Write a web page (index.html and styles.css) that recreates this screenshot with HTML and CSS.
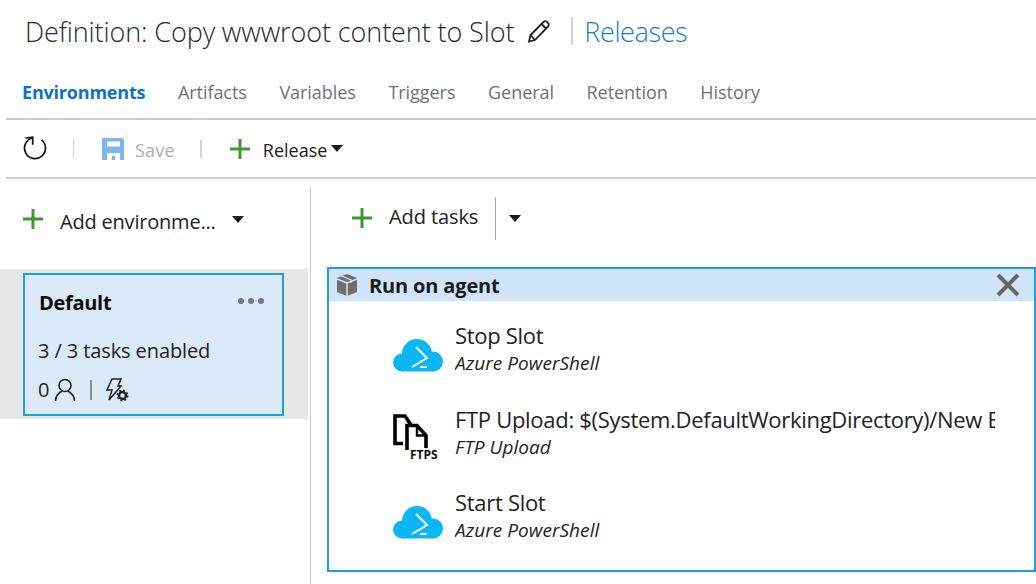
FILE: index.html
```html
<!DOCTYPE html>
<html>
<head>
<meta charset="utf-8">
<title>Definition</title>
<link rel="stylesheet" href="styles.css">
</head>
<body>

<header class="title-bar">
  <h1>Definition: Copy wwwroot content to Slot</h1>
  <svg class="pencil" width="24" height="24" viewBox="0 0 24 24"><path d="M2 22.500l1.500-6.500L16.500 3c1-1 2.500-1 3.500 0l1 1c1 1 1 2.500 0 3.500L8 21zM3.500 16L8 21M14.500 5l4.500 4.500" fill="none" stroke="#222" stroke-width="1.800"/></svg>
  <span class="title-sep"></span>
  <a class="releases">Releases</a>
</header>

<nav class="tabs">
  <a class="tab active">Environments</a>
  <a class="tab">Artifacts</a>
  <a class="tab">Variables</a>
  <a class="tab">Triggers</a>
  <a class="tab">General</a>
  <a class="tab">Retention</a>
  <a class="tab">History</a>
</nav>

<div class="toolbar">
  <svg class="refresh" width="26" height="26" viewBox="0 0 26 26"><path d="M18.500 3.800A10.500 10.500 0 1 1 9 2" fill="none" stroke="#111" stroke-width="1.700"/><path d="M2.300 2L9.700 1.300V8.700" fill="none" stroke="#111" stroke-width="1.700"/></svg>
  <span class="tool-sep first"></span>
  <svg class="save" width="22" height="22" viewBox="0 0 22 22"><path d="M0 0h20l2 2v20H0z" fill="#7db7ec"/><path d="M5 3.500h13v5H5z" fill="#fff"/><path d="M5 15h13v7H5z" fill="#fff"/><path d="M10 18h3v4h-3z" fill="#7db7ec"/></svg>
  <span class="save-label">Save</span>
  <span class="tool-sep"></span>
  <svg class="plus" width="20" height="20" viewBox="0 0 20 20"><path d="M10 0v20M0 10h20" stroke="#3c9a2c" stroke-width="3"/></svg>
  <span class="release-label">Release</span>
  <span class="caret"></span>
</div>

<main class="columns">
  <aside class="env-pane">
    <div class="add-env">
      <svg class="plus" width="20" height="20" viewBox="0 0 20 20"><path d="M10 0v20M0 10h20" stroke="#3c9a2c" stroke-width="3"/></svg>
      <span class="add-env-label">Add environme...</span>
      <span class="caret"></span>
    </div>
    <div class="env-row">
      <div class="env-card">
        <div class="env-head">
          <span class="env-name">Default</span>
          <span class="env-dots"><i></i><i></i><i></i></span>
        </div>
        <div class="env-tasks">3 / 3 tasks enabled</div>
        <div class="env-foot">
          <span>0</span>
          <svg width="22" height="24" viewBox="0 0 22 24"><circle cx="11" cy="7.500" r="6" fill="none" stroke="#222" stroke-width="1.600"/><path d="M1.500 23c0-5 3-8 6.500-10M20.500 23c0-5-3-8-6.500-10" fill="none" stroke="#222" stroke-width="1.600"/></svg>
          <span class="foot-sep"></span>
          <svg width="24" height="24" viewBox="0 0 24 24"><path d="M7 1h9l-3 7h3L4 22l3-10H2z" fill="none" stroke="#222" stroke-width="1.500"/><circle cx="17.500" cy="17.500" r="3.500" fill="none" stroke="#222" stroke-width="2.400"/><circle cx="17.500" cy="17.500" r="5.200" fill="none" stroke="#222" stroke-width="1.500" stroke-dasharray="2 2.080"/></svg>
        </div>
      </div>
    </div>
  </aside>

  <section class="task-pane">
    <div class="add-tasks">
      <svg class="plus" width="20" height="20" viewBox="0 0 20 20"><path d="M10 0v20M0 10h20" stroke="#3c9a2c" stroke-width="3"/></svg>
      <span class="add-tasks-label">Add tasks</span>
      <span class="add-tasks-sep"></span>
      <span class="caret"></span>
    </div>
    <div class="phase">
      <div class="phase-head">
        <svg width="24" height="24" viewBox="0 0 24 24"><path d="M12 1l10 4v14l-10 4L2 19V5z" fill="#6e6e6e"/><path d="M2 6l10 4 10-4M12 10v13" fill="none" stroke="#cfe5f7" stroke-width="1.500"/><path d="M6 2.800l10 4.200v3" fill="none" stroke="#cfe5f7" stroke-width="1.200"/></svg>
        <span class="phase-name">Run on agent</span>
        <svg class="phase-close" width="24" height="24" viewBox="0 0 24 24"><path d="M2 2l20 20M22 2L2 22" stroke="#666" stroke-width="4"/></svg>
      </div>
      <div class="task">
        <svg class="task-icon" width="52" height="34" viewBox="0 0 52 34"><circle cx="9" cy="23.500" r="9" fill="#0bb7f2"/><circle cx="24" cy="15" r="15" fill="#0bb7f2"/><circle cx="40" cy="22.500" r="10" fill="#0bb7f2"/><path d="M9 24h31v8.500H9z" fill="#0bb7f2"/><path d="M23 8l11 11-15 9" fill="none" stroke="#fff" stroke-width="2"/><path d="M27 28h7" stroke="#fff" stroke-width="2"/></svg>
        <div class="task-text">
          <div class="task-name">Stop Slot</div>
          <div class="task-type">Azure PowerShell</div>
        </div>
      </div>
      <div class="task">
        <div class="ftp-icon">
          <svg width="35" height="36" viewBox="0 0 35 36"><path d="M10 29.500H2V2h10l6 9" fill="none" stroke="#000" stroke-width="3.600"/><path d="M14 36V11.500h10l9 10V34" fill="none" stroke="#000" stroke-width="3.600"/><path d="M24 12v9.500h9" fill="none" stroke="#000" stroke-width="2.400"/></svg>
          <span class="ftp-label">FTPS</span>
        </div>
        <div class="task-text">
          <div class="task-name">FTP Upload: $(System.DefaultWorkingDirectory)/New Build Definition/drop</div>
          <div class="task-type">FTP Upload</div>
        </div>
      </div>
      <div class="task">
        <svg class="task-icon" width="52" height="34" viewBox="0 0 52 34"><circle cx="9" cy="23.500" r="9" fill="#0bb7f2"/><circle cx="24" cy="15" r="15" fill="#0bb7f2"/><circle cx="40" cy="22.500" r="10" fill="#0bb7f2"/><path d="M9 24h31v8.500H9z" fill="#0bb7f2"/><path d="M23 8l11 11-15 9" fill="none" stroke="#fff" stroke-width="2"/><path d="M27 28h7" stroke="#fff" stroke-width="2"/></svg>
        <div class="task-text">
          <div class="task-name">Start Slot</div>
          <div class="task-type">Azure PowerShell</div>
        </div>
      </div>
    </div>
  </section>
</main>

</body>
</html>
```
FILE: styles.css
```css
html, body {
    margin: 0;
    padding: 0;
}

body {
    width: 1036px;
    height: 584px;
    overflow: hidden;
    background: #fff;
    color: #222;
    font-family: "Open Sans", "Noto Sans", sans-serif;
}

svg {
    display: block;
    flex: none;
}

.title-bar {
    display: flex;
    align-items: center;
    height: 64px;
    padding-left: 25px;
    padding-bottom: 2px;
    box-sizing: border-box;
}

.title-bar h1 {
    margin: 0;
    font-size: 27px;
    font-weight: 300;
    letter-spacing: -0.1px;
    color: #1f2a35;
}

.pencil {
    margin-left: 13px;
}

.title-sep {
    width: 2px;
    height: 28px;
    margin: 0 11px 0 20px;
    background: #d4d4d4;
}

.releases {
    font-size: 27px;
    font-weight: 300;
    letter-spacing: -0.4px;
    color: #1a7fc8;
}

.tabs {
    display: flex;
    gap: 32.600px;
    align-items: center;
    height: 56px;
    margin-left: 6px;
    padding: 2px 0 0 16px;
    box-sizing: border-box;
    border-bottom: 2px solid #ccc;
    font-size: 18px;
    letter-spacing: -0.05px;
    color: #6f7276;
}

.tab.active {
    font-weight: 700;
    color: #0f73c4;
    letter-spacing: -0.2px;
}

.toolbar {
    display: flex;
    align-items: center;
    height: 59px;
    margin-left: 6px;
    padding-left: 17px;
    box-sizing: border-box;
    border-bottom: 2px solid #ccc;
}

.tool-sep {
    width: 2px;
    height: 18px;
    margin: 0 28px 0 25px;
    background: #d4d4d4;
}

.tool-sep.first {
    margin: 0 28px 0 24px;
    width: 1px;
}

.save-label {
    margin: 2px 0 0 11px;
    font-size: 18px;
    letter-spacing: 0.2px;
    color: #adadad;
}

.release-label {
    margin: 2px 0 0 13px;
    font-size: 18px;
    color: #1a1a1a;
}

.caret {
    display: block;
    width: 0;
    height: 0;
    border-left: 6.500px solid transparent;
    border-right: 6.500px solid transparent;
    border-top: 7px solid #1a1a1a;
    flex: none;
}

.release-label + .caret {
    margin-left: 4px;
}

.columns {
    display: flex;
    margin-top: 8px;
    height: 397px;
}

.env-pane {
    width: 310px;
    border-right: 1px solid #ccc;
    flex: none;
}

.add-env {
    display: flex;
    align-items: center;
    height: 64px;
    padding-left: 23px;
    margin-bottom: 18px;
}

.add-env-label {
    margin-left: 17px;
    margin-top: 4px;
    font-size: 20px;
    letter-spacing: -0.2px;
    color: #222;
}

.add-env .caret {
    margin-left: 16px;
}

.env-row {
    width: 308px;
    height: 150px;
    box-sizing: border-box;
    padding: 4px 0 0 23px;
    background: #e6e6e6;
}

.env-card {
    width: 261px;
    height: 143px;
    box-sizing: border-box;
    padding: 15px 14px 0 14px;
    background: #dbe9f9;
    border: 2px solid #1ba1e2;
}

.env-head {
    display: flex;
    justify-content: space-between;
    align-items: center;
    height: 24px;
}

.env-name {
    font-size: 20px;
    font-weight: 700;
    letter-spacing: -0.3px;
    color: #0c0c0c;
}

.env-dots {
    display: flex;
    gap: 4px;
    margin-right: 4px;
    margin-bottom: 2px;
}

.env-dots i {
    display: block;
    width: 6px;
    height: 6px;
    border-radius: 50%;
    background: #777;
}

.env-tasks {
    margin-top: 24px;
    margin-left: -1px;
    font-size: 20px;
    line-height: 26px;
    letter-spacing: -0.1px;
    color: #222;
}

.env-foot {
    display: flex;
    align-items: center;
    margin: 13px 0 0 -1px;
    font-size: 20px;
    line-height: 26px;
}

.env-foot span:first-child {
    margin-right: 5px;
}

.foot-sep {
    width: 2px;
    height: 20px;
    margin: 0 13px 0 14px;
    background: #8a8f96;
}

.task-pane {
    flex: 1;
    min-width: 0;
}

.add-tasks {
    display: flex;
    align-items: center;
    height: 62px;
    padding-left: 41px;
    margin-bottom: 18px;
}

.add-tasks-label {
    margin-left: 17px;
    margin-bottom: 4px;
    font-size: 20px;
    letter-spacing: -0.1px;
}

.add-tasks-sep {
    width: 1px;
    height: 43px;
    margin: 0 13px 0 17px;
    background: #aaa;
}

.phase {
    width: 709px;
    height: 305px;
    margin-left: 16px;
    box-sizing: border-box;
    border: 2px solid #1ba1e2;
}

.phase-head {
    display: flex;
    align-items: center;
    height: 32px;
    margin-bottom: 6.500px;
    padding-left: 6px;
    background: #cfe5f7;
}

.phase-name {
    margin-left: 10px;
    font-size: 20px;
    font-weight: 700;
    letter-spacing: -0.15px;
    color: #1a1a1a;
}

.phase-close {
    margin-left: auto;
    margin-right: 14px;
}

.task {
    display: flex;
    align-items: center;
    height: 83.500px;
    padding-left: 64px;
}

.task-icon {
    margin-top: 13px;
}

.ftp-icon {
    width: 52px;
    height: 46px;
    margin-top: 9px;
    flex: none;
}

.ftp-label {
    display: block;
    margin: -2px 0 0 17px;
    font-size: 12px;
    font-weight: 700;
    line-height: 13px;
    color: #111;
}

.task-text {
    width: 540px;
    margin-left: 10px;
    overflow: hidden;
    white-space: nowrap;
}

.task-name {
    font-size: 22px;
    line-height: 28px;
    letter-spacing: -0.3px;
    color: #222;
}

.task-type {
    margin-top: 1px;
    font-size: 19px;
    font-style: italic;
    line-height: 27px;
    letter-spacing: 0.05px;
    color: #222;
}
```
